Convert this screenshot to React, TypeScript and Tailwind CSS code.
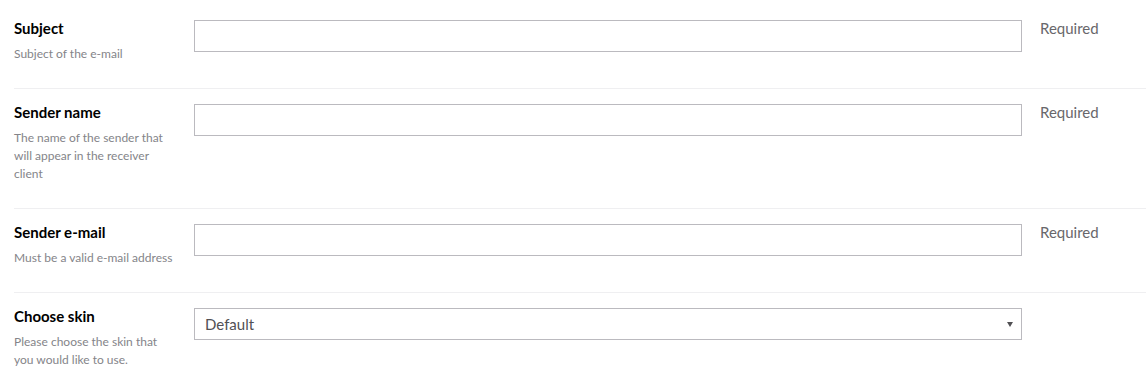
import React from 'react';

type Field = {
	label: string;
	description: string;
	required?: boolean;
	select?: boolean;
};

const fields: Field[] = [
	{ label: 'Subject', description: 'Subject of the e-mail', required: true },
	{
		label: 'Sender name',
		description: 'The name of the sender that will appear in the receiver client',
		required: true,
	},
	{ label: 'Sender e-mail', description: 'Must be a valid e-mail address', required: true },
	{
		label: 'Choose skin',
		description: 'Please choose the skin that you would like to use.',
		select: true,
	},
];

// Row -------------------------------------------------------------------------
function PropertyRow({ field, last }: { field: Field; last: boolean }) {
	return (
		<div className={`flex pt-[11px] pb-[25px] ${last ? '' : 'border-b border-[#efeff1]'}`}>
			<div className="w-[180px] shrink-0 pr-5">
				<div className="text-[15px] leading-6 font-bold text-black">{field.label}</div>
				<div className="mt-[5px] text-[12px] leading-[18px] text-[#848489]">
					{field.description}
				</div>
			</div>
			<div className="mt-1 w-[828px] shrink-0">
				{field.select ? (
					<div className="relative">
						<select className="w-full h-8 appearance-none border border-[#bbbabf] bg-white pl-[10px] pr-6 text-[15px] text-[#515054] outline-none">
							<option>Default</option>
						</select>
						<svg
							className="pointer-events-none absolute right-[9px] top-[14px]"
							width="6"
							height="5"
							viewBox="0 0 6 5"
						>
							<path d="M0 0h6L3 5z" fill="#515054" />
						</svg>
					</div>
				) : (
					<input
						type="text"
						className="block w-full h-8 border border-[#bbbabf] bg-white px-[10px] text-[15px] text-[#515054] outline-none"
					/>
				)}
			</div>
			{field.required && (
				<div className="ml-[18px] text-[15px] leading-6 text-[#68676b]">Required</div>
			)}
		</div>
	);
}

// App -------------------------------------------------------------------------
export default function App() {
	return (
		<div
			className="w-[1146px] h-[383px] overflow-hidden bg-white pl-[14px] pt-[5px]"
			style={{ fontFamily: 'Lato, "Open Sans", sans-serif' }}
		>
			{fields.map((f, i) => (
				<PropertyRow key={f.label} field={f} last={i === fields.length - 1} />
			))}
		</div>
	);
}
